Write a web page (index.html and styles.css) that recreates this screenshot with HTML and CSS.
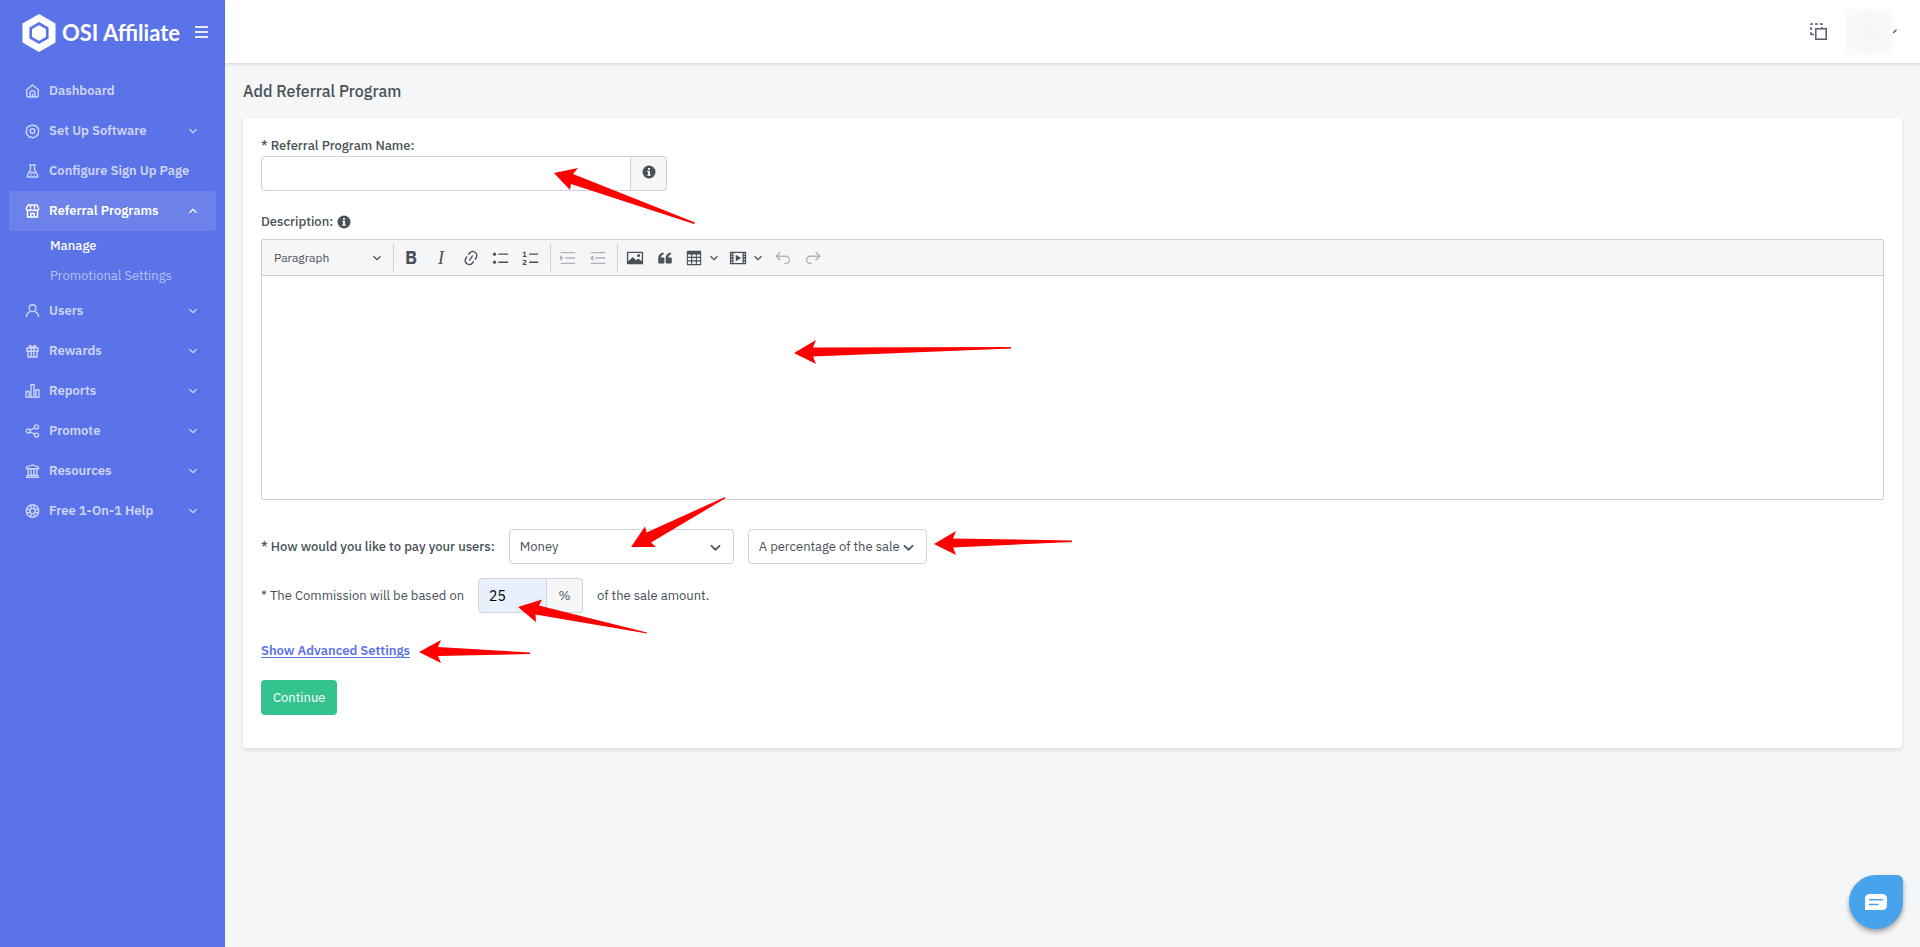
FILE: index.html
```html
<!DOCTYPE html>
<html lang="en">
<head>
<meta charset="utf-8">
<title>Add Referral Program</title>
<link rel="stylesheet" href="styles.css">
</head>
<body>
<svg class="defs" aria-hidden="true">
  <symbol id="chevron" viewBox="0 0 10 10"><path d="M1.500 3.300 5 6.700l3.500-3.400" fill="none" stroke="currentColor" stroke-width="1.300"/></symbol>
  <symbol id="info" viewBox="0 0 14 14"><circle cx="7" cy="7" r="6.500" fill="currentColor"/><path d="M6 3h2v1.700H6zM5.300 5.800h2.600v3.700h.8v1.300H5.300V9.500h.8V7.100h-.8z" fill="#fff"/></symbol>
</svg>
<div class="app">
  <aside class="sidebar">
    <div class="brand">
      <svg class="brand-mark" viewBox="0 0 34 38"><path d="M17 0 33.500 9.500v19L17 38 .5 28.500v-19z" fill="#fff"/><path d="M17 9.500 25.300 14.300v9.400L17 28.500 8.700 23.700v-9.400z" fill="#fff" stroke="#5b73e8" stroke-width="2.600"/></svg>
      <span class="brand-name">OSI Affiliate</span>
      <button class="menu-toggle" aria-label="Toggle menu"><svg viewBox="0 0 13 12"><path d="M0 1h13M0 6h13M0 11h13" stroke="currentColor" stroke-width="2"/></svg></button>
    </div>
    <nav class="nav">
      <a class="nav-item" href="#"><svg class="nav-icon" viewBox="0 0 14 14"><path d="M1.200 11.500V5.800L7 1l5.800 4.800v5.700q0 1.500-1.500 1.500H2.700q-1.500 0-1.500-1.500zM4.600 12.800V9a2.400 2.400 0 0 1 4.800 0v3.800M7 9.500V13"/></svg><span>Dashboard</span></a>
      <a class="nav-item" href="#"><svg class="nav-icon" viewBox="0 0 14 14"><path d="M5.400 1.800 7 .9l1.600.9 1.900 0 .9 1.600 1.600 1-.1 1.800.4 1-.7 1.600.1 1.800-1.600 1-1 1.500-1.800 0-1.300.8-1.600-.9-1.900 0-.9-1.600-1.600-1 .1-1.800L.7 7l.7-1.600-.1-1.400 1.500-.9.900-1.400z"/><circle cx="7" cy="7" r="2.300"/></svg><span>Set Up Software</span><svg class="caret"><use href="#chevron"/></svg></a>
      <a class="nav-item" href="#"><svg class="nav-icon" viewBox="0 0 14 14"><path d="M3.500 1h7M5 1v4.500L1.700 11.700Q1.300 13 2.500 13h9q1.200 0 .8-1.300L9 5.500V1M4 8.500h6M5 10.800h1.300M8.300 10.800h1"/></svg><span>Configure Sign Up Page</span></a>
      <a class="nav-item active" href="#"><svg class="nav-icon" viewBox="0 0 14 14"><path d="M2.500 1h9L13.200 4.500Q13 6.500 11 6.500T9 4.500Q9 6.500 7 6.500T5 4.500Q5 6.500 3 6.500T.8 4.500zM2 6.500V13h10V6.500M5.300 13V9.500h3.400V13M5 1v3M9 1v3"/></svg><span>Referral Programs</span><svg class="caret up"><use href="#chevron"/></svg></a>
      <a class="nav-sub current" href="#">Manage</a>
      <a class="nav-sub" href="#">Promotional Settings</a>
      <a class="nav-item" href="#"><svg class="nav-icon" viewBox="0 0 14 14"><circle cx="7" cy="4.200" r="3.400"/><path d="M.9 13.300a6.200 6.200 0 0 1 3.700-5.600M13.100 13.300a6.200 6.200 0 0 0-3.700-5.600"/></svg><span>Users</span><svg class="caret"><use href="#chevron"/></svg></a>
      <a class="nav-item" href="#"><svg class="nav-icon" viewBox="0 0 14 14"><path d="M1.500 4h11v3.200h-11zM2.500 7.200V13h9V7.200M5.600 4v9M8.400 4v9M7 4Q3.500 3.800 3.800 2.200 4.500.5 7 3.500 9.500.5 10.200 2.200 10.500 3.800 7 4"/></svg><span>Rewards</span><svg class="caret"><use href="#chevron"/></svg></a>
      <a class="nav-item" href="#"><svg class="nav-icon" viewBox="0 0 14 14"><path d="M.6 7.500h3v5.900h-3zM5.500.7h3v12.700h-3zM10.400 5.700h3v7.700h-3z"/></svg><span>Reports</span><svg class="caret"><use href="#chevron"/></svg></a>
      <a class="nav-item" href="#"><svg class="nav-icon" viewBox="0 0 14 14"><circle cx="2.800" cy="7" r="2"/><circle cx="11" cy="2.900" r="2"/><circle cx="11" cy="11.100" r="2"/><path d="M4.600 6.100 9.200 3.800M4.600 7.900l4.600 2.300"/></svg><span>Promote</span><svg class="caret"><use href="#chevron"/></svg></a>
      <a class="nav-item" href="#"><svg class="nav-icon" viewBox="0 0 14 14"><path d="M.5 13.200h13M1 4.800V3.200L7 .9l6 2.300v1.600zM2 11.200h10M2.700 5v6M5.500 5v6M8.500 5v6M11.300 5v6M1.500 11.200v2M12.500 11.200v2"/></svg><span>Resources</span><svg class="caret"><use href="#chevron"/></svg></a>
      <a class="nav-item" href="#"><svg class="nav-icon" viewBox="0 0 14 14"><circle cx="7" cy="7" r="6.200"/><circle cx="7" cy="7" r="2.600"/><path d="M5 1.200 5.800 4.600M9 1.200 8.200 4.600M5 12.800l.8-3.400M9 12.800l-.8-3.400M1.200 5l3.400.8M1.200 9l3.400-.8M12.800 5l-3.400.8M12.800 9l-3.400-.8"/></svg><span>Free 1-On-1 Help</span><svg class="caret"><use href="#chevron"/></svg></a>
    </nav>
  </aside>

  <div class="page">
    <header class="topbar">
      <button class="copy-btn" aria-label="Copy"><svg viewBox="0 0 17 17"><path d="M1 12V1h11v4M1 11.500h4" fill="none" stroke="currentColor" stroke-width="1.500" stroke-dasharray="3 2"/><path d="M5.800 5.800h10.400v10.400H5.800z" fill="#fff" stroke="currentColor" stroke-width="1.500"/></svg></button>
      <div class="account"><span class="avatar"></span><svg class="account-caret" viewBox="0 0 4 5"><path d="M0 4 3.500.7" fill="none" stroke="currentColor" stroke-width="1.400"/></svg></div>
    </header>

    <main class="content">
      <h1 class="title">Add Referral Program</h1>
      <form class="card">
        <label class="label" for="program-name">* Referral Program Name:</label>
        <div class="group name-group">
          <input class="input" id="program-name" type="text">
          <span class="addon"><svg class="info"><use href="#info"/></svg></span>
        </div>

        <div class="label description-label" id="description-label">Description: <svg class="info"><use href="#info"/></svg></div>
        <div class="editor">
          <div class="toolbar">
            <button type="button" class="heading-btn">Paragraph<svg class="small-caret"><use href="#chevron"/></svg></button>
            <span class="sep"></span>
            <button type="button" class="tool bold">B</button>
            <button type="button" class="tool italic">I</button>
            <button type="button" class="tool" aria-label="Link"><svg viewBox="0 0 20 20"><path d="m11.077 15 .991-1.416a.75.75 0 1 1 1.229.86l-1.148 1.640a.748.748 0 0 1-.217.206 5.251 5.251 0 0 1-8.503-5.955.741.741 0 0 1 .12-.274l1.147-1.639a.75.75 0 1 1 1.228.86L4.933 10.700l.006.003a3.750 3.750 0 0 0 6.132 4.294l.006.004zm5.494-5.335a.748.748 0 0 1-.12.274l-1.147 1.639a.75.75 0 1 1-1.228-.86l.86-1.230a3.750 3.750 0 0 0-6.144-4.301l-.86 1.229a.75.75 0 0 1-1.229-.86l1.148-1.640a.748.748 0 0 1 .217-.206 5.251 5.251 0 0 1 8.503 5.955zm-4.563-2.532a.75.75 0 0 1 .184 1.045l-3.155 4.505a.75.75 0 1 1-1.229-.86l3.155-4.506a.75.75 0 0 1 1.045-.184z"/></svg></button>
            <button type="button" class="tool" aria-label="Bulleted list"><svg viewBox="0 0 20 20"><circle cx="2.800" cy="5.700" r="1.800"/><circle cx="2.800" cy="14.700" r="1.800"/><path d="M7 5h11v1.500H7zM7 14h11v1.500H7z"/></svg></button>
            <button type="button" class="tool" aria-label="Numbered list"><svg viewBox="0 0 20 20"><path d="M8 5h10v1.500H8zM8 14h10v1.500H8z"/><text x="0" y="8.500" class="digit">1</text><text x="0" y="18" class="digit">2</text></svg></button>
            <span class="sep"></span>
            <button type="button" class="tool" disabled aria-label="Increase indent"><svg viewBox="0 0 20 20"><path d="M2 3.200h16v1.500H2zM7 9.200h11v1.500H7zM2 15.200h16v1.500H2zM1 6.800 5 10l-4 3.200z"/></svg></button>
            <button type="button" class="tool" disabled aria-label="Decrease indent"><svg viewBox="0 0 20 20"><path d="M2 3.200h16v1.500H2zM7 9.200h11v1.500H7zM2 15.200h16v1.500H2zM5 6.800 1 10l4 3.200z"/></svg></button>
            <span class="sep"></span>
            <button type="button" class="tool" aria-label="Insert image"><svg viewBox="0 0 20 20"><path fill-rule="evenodd" d="M2 3h16q1 0 1 1v12q0 1-1 1H2q-1 0-1-1V4q0-1 1-1zm.5 1.500v9.200L7.500 9l3.700 3.500 2.500-2 3.800 3.200V4.500zM14 5.500a1.700 1.700 0 1 1 0 3.400 1.700 1.700 0 0 1 0-3.400z"/></svg></button>
            <button type="button" class="tool" aria-label="Block quote"><svg viewBox="0 0 20 20"><path d="M2.500 10.400a6.500 6.500 0 0 1 6-6.600v2q-3 .9-3.200 3.600H8.300q1 0 1 1V15q0 1-1 1H3.500q-1 0-1-1zM10.700 10.400a6.500 6.500 0 0 1 6-6.600v2q-3 .9-3.200 3.600H16.500q1 0 1 1V15q0 1-1 1h-4.800q-1 0-1-1z"/></svg></button>
            <button type="button" class="tool wide" aria-label="Insert table"><svg viewBox="0 0 20 20"><path fill-rule="evenodd" d="M3 2h14q1 0 1 1v14q0 1-1 1H3q-1 0-1-1V3q0-1 1-1zm.2 4v2.700h3.600V6zm4.800 0v2.700h4V6zm5.200 0v2.700h3.600V6zm-10 4v2.600h3.600V10zm4.800 0v2.600h4V10zm5.200 0v2.600h3.600V10zm-10 3.900v2.800h3.600v-2.800zm4.800 0v2.800h4v-2.800zm5.200 0v2.800h3.600v-2.800z"/></svg><svg class="small-caret"><use href="#chevron"/></svg></button>
            <button type="button" class="tool wide" aria-label="Insert media"><svg viewBox="0 0 20 20"><path fill-rule="evenodd" d="M1 3h18v14H1zm4 1.500v11h10v-11zM2.200 5v1.300h1.500V5zm0 3v1.300h1.500V8zm0 3v1.300h1.500V11zm0 3v1.300h1.500V14zM16.300 5v1.300h1.500V5zm0 3v1.300h1.500V8zm0 3v1.300h1.500V11zm0 3v1.300h1.500V14zM7.500 6.300v7.400L13.500 10z"/></svg><svg class="small-caret"><use href="#chevron"/></svg></button>
            <button type="button" class="tool" disabled aria-label="Undo"><svg viewBox="0 0 20 20"><path d="M6.500 4 2.500 8l4 4M2.700 8h10.500a4 4 0 0 1 0 8H12" class="line"/></svg></button>
            <button type="button" class="tool" disabled aria-label="Redo"><svg viewBox="0 0 20 20"><path d="m13.500 4 4 4-4 4M17.300 8H6.800a4 4 0 0 0 0 8H8" class="line"/></svg></button>
          </div>
          <textarea class="editor-area" aria-labelledby="description-label"></textarea>
        </div>

        <div class="row pay-row">
          <label class="label" for="pay-type">* How would you like to pay your users:</label>
          <span class="select-wrap money"><select class="select" id="pay-type"><option>Money</option></select><svg class="select-caret"><use href="#chevron"/></svg></span>
          <span class="select-wrap percent"><select class="select" aria-label="Commission type"><option>A percentage of the sale</option></select><svg class="select-caret"><use href="#chevron"/></svg></span>
        </div>

        <div class="row commission-row">
          <label for="commission">* The Commission will be based on</label>
          <div class="group commission-group">
            <input class="input filled" id="commission" type="text" value="25">
            <span class="addon">%</span>
          </div>
          <span>of the sale amount.</span>
        </div>

        <a class="advanced" href="#">Show Advanced Settings</a>
        <button type="button" class="continue">Continue</button>
      </form>
    </main>
  </div>

  <button class="chat" aria-label="Open chat"><svg viewBox="0 0 22 16"><path d="M5 0h12q5 0 5 5v6q0 5-5 5H0V5q0-5 5-5z" fill="#fff"/><path d="M4.500 5.700h13M4.500 10.500H13" stroke="#47a3ec" stroke-width="1.500" stroke-linecap="round"/></svg></button>

  <svg class="arrows" aria-hidden="true">
    <path d="M554 173 578 168 573 174 695 222.500 694 224 571 184 570 190z"/>
    <path d="M794 353 816 340 813 347.500 1011 347v1.500L813 356.500 816 364z"/>
    <path d="M631 547 645 526.500 646.500 532.500 725 497v1.500L651 542.500 656 547z"/>
    <path d="M934 544 956 531 953 538.500 1072 540.500v1.500L953 547.500 956 555z"/>
    <path d="M518 607 542 599.500 539 605.500 647 632.500v1L535.500 614.500 536 622z"/>
    <path d="M419 652 441 640 438 647 530 652.500v1.500L438 656 441 663z"/>
  </svg>
</div>
</body>
</html>
```
FILE: styles.css
```css
* { box-sizing: border-box; }
body {
  margin: 0;
  background: #f5f6f8;
  color: #495057;
  font: 400 13px/20px "IBM Plex Sans", Roboto, sans-serif;
}
button, input, select, textarea { font: inherit; color: inherit; }
button { padding: 0; border: 0; background: none; }
.defs { position: absolute; width: 0; height: 0; }

.app { position: relative; display: flex; min-height: 100vh; overflow: hidden; }

/* Sidebar */
.sidebar { flex: 0 0 225px; background: #5b73e8; color: #ced5f8; }
.brand { display: flex; align-items: center; height: 66px; padding: 0 17px 0 22px; }
.brand-mark { width: 34px; height: 38px; }
.brand-name { margin-left: 6px; color: #fff; font: 700 22px/28px Lato, sans-serif; white-space: nowrap; }
.menu-toggle { display: flex; margin-left: auto; padding-bottom: 2px; color: #e6eafc; }
.menu-toggle svg { width: 13px; height: 12px; }
.nav { display: flex; flex-direction: column; padding: 5px 9px; }
.nav-item {
  display: flex;
  align-items: center;
  gap: 9px;
  height: 40px;
  padding: 0 18px 0 16px;
  border-radius: 3px;
  color: inherit;
  font-weight: 600;
  text-decoration: none;
  white-space: nowrap;
}
.nav-icon { width: 15px; height: 14px; fill: none; stroke: currentColor; stroke-width: 1.4; overflow: visible; }
.caret { width: 10px; height: 10px; margin-left: auto; }
.caret.up { transform: rotate(180deg); }
.nav-item.active { background: #6c81ea; color: #fff; }
.nav-sub { height: 30px; padding-left: 41px; color: #b5c0f5; line-height: 30px; text-decoration: none; }
.nav-sub.current { color: #fff; font-weight: 500; }

/* Top bar */
.page { flex: 1; min-width: 0; }
.topbar {
  display: flex;
  align-items: center;
  justify-content: flex-end;
  gap: 19px;
  height: 63px;
  padding: 0 23px;
  background: #fff;
  box-shadow: 0 1px 3px rgba(15, 34, 58, .16);
}
.copy-btn { display: flex; color: #555b6d; }
.copy-btn svg { width: 17px; height: 17px; }
.account { display: flex; align-items: center; color: #555b6d; }
.avatar { width: 47px; height: 46px; background: radial-gradient(#f5f5f5, #fbfbfb); }
.account-caret { width: 4px; height: 5px; }

/* Form card */
.content { padding: 18px; }
.title { margin: 0 0 17px; font-size: 16px; font-weight: 500; line-height: 20px; }
.card {
  display: flex;
  flex-direction: column;
  align-items: flex-start;
  padding: 18px 18px 33px;
  border-radius: 4px;
  background: #fff;
  box-shadow: 0 2px 4px rgba(15, 34, 58, .12);
}
.label { font-weight: 500; }
.info { width: 14px; height: 14px; }
.group { display: flex; height: 35px; }
.input { flex: 1; min-width: 0; padding: 0 10px; border: 1px solid #ced4da; border-radius: 4px 0 0 4px; background: #fff; }
.input.filled { background: #e8f0fe; color: #000; font-size: 14px; }
.addon {
  display: flex;
  align-items: center;
  justify-content: center;
  width: 36px;
  border: 1px solid #ced4da;
  border-left: 0;
  border-radius: 0 4px 4px 0;
  background: #f5f6f8;
}
.name-group { width: 406px; }
.name-group .addon { padding-bottom: 3px; }
.description-label { display: flex; align-items: center; gap: 4px; margin: 21px 0 7px; }

.editor { align-self: stretch; border: 1px solid #ccced1; border-radius: 2px; }
.toolbar { display: flex; align-items: center; height: 36px; padding-left: 5px; border-bottom: 1px solid #ccced1; background: #f5f6f8; }
.heading-btn { display: flex; align-items: center; justify-content: space-between; width: 122px; padding: 0 7px; font-size: 12px; }
.sep { width: 1px; height: 27px; margin: 0 2px 0 4px; background: #ccced1; }
.small-caret { width: 10px; height: 10px; }
.tool { display: flex; align-items: center; justify-content: center; width: 30px; height: 30px; }
.tool svg { width: 18px; height: 18px; fill: currentColor; }
.tool .small-caret { width: 10px; height: 10px; }
.tool:disabled { color: #b0b4b9; }
.tool.bold { font-size: 18px; font-weight: 700; }
.tool.italic { font: italic 18px/20px "Liberation Serif", serif; }
.tool.wide { gap: 6px; width: 44px; }
.line { fill: none; stroke: currentColor; stroke-width: 1.6; stroke-linecap: round; }
.digit { font: 700 8px "DejaVu Sans", sans-serif; }
.editor-area { display: block; width: 100%; height: 223px; padding: 10px; border: 0; background: #fff; resize: none; }

.row { display: flex; align-items: center; gap: 14px; }
.pay-row { margin-top: 29px; }
.select-wrap { position: relative; display: flex; height: 35px; }
.select { width: 100%; padding: 0 10px; border: 1px solid #ced4da; border-radius: 4px; appearance: none; background: #fff; }
.select-caret { position: absolute; top: 12px; right: 12px; width: 13px; height: 13px; pointer-events: none; }
.money { width: 225px; }
.percent { width: 179px; }
.commission-row { margin-top: 14px; }
.commission-group { width: 105px; }

.advanced { margin-top: 28px; color: #5b73e8; font-weight: 600; text-decoration: underline; text-underline-offset: 2px; }
.continue { height: 35px; margin-top: 19px; padding: 0 12px; border-radius: 4px; background: #34c38f; color: #fff; }

/* Floating layers */
.chat {
  position: absolute;
  right: 17px;
  bottom: 18px;
  display: flex;
  align-items: center;
  justify-content: center;
  width: 54px;
  height: 54px;
  border-radius: 27px 6px 27px 27px;
  background: #47a3ec;
  box-shadow: 0 3px 5px rgba(0, 0, 0, .35);
}
.chat svg { width: 22px; height: 16px; }
.arrows { position: absolute; top: 0; left: 0; width: 100%; height: 100%; fill: #f00; pointer-events: none; }
```
